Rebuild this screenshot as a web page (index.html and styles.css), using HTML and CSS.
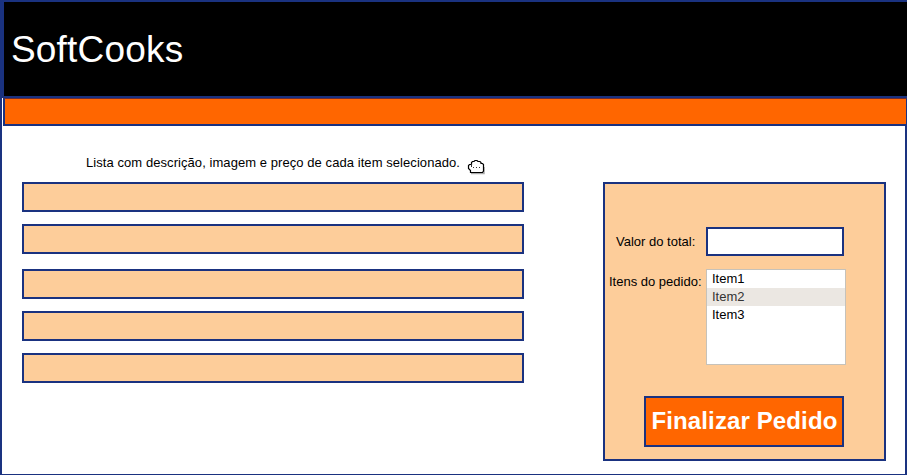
FILE: index.html
```html
<!DOCTYPE html>
<html lang="pt-BR">
<head>
<meta charset="utf-8">
<title>SoftCooks</title>
<link rel="stylesheet" href="styles.css">
</head>
<body>
<div class="page">
  <header class="header"><h1 class="brand">SoftCooks</h1></header>
  <nav class="navbar"></nav>
  <main class="content">
    <section class="products">
      <div class="caption">
        <span>Lista com descrição, imagem e preço de cada item selecionado.</span>
        <svg class="hand" width="20" height="17" viewBox="0 0 20 17">
          <path class="hand-shadow" d="M5 14.5H18V8"/>
          <path class="hand-shape" d="M4.500 13.500V11.500L2.500 9.500V6.500L3.500 5.500H5.500V3.500L6.500 2.500H8L9 1.500H11L12 2.500H14L15 3.500V4.500H16.500L17.500 5.500V12L16.500 13.500Z"/>
          <path class="hand-lines" d="M5.500 5V8M7 8.500H8M10 8.500H11M13 8.500H14"/>
        </svg>
      </div>
      <ul class="rows">
        <li class="row"></li>
        <li class="row row-wide"></li>
        <li class="row"></li>
        <li class="row"></li>
        <li class="row"></li>
      </ul>
    </section>
    <aside class="order">
      <div class="field total">
        <label class="label" for="total">Valor do total:</label>
        <input class="total-input" id="total" type="text">
      </div>
      <div class="field items">
        <span class="label">Itens do pedido:</span>
        <ul class="listbox">
          <li>Item1</li>
          <li class="selected">Item2</li>
          <li>Item3</li>
        </ul>
      </div>
      <button class="submit" type="button">Finalizar Pedido</button>
    </aside>
  </main>
</div>
</body>
</html>
```
FILE: styles.css
```css
* { box-sizing: border-box; }

body {
  margin: 0;
  background: #fff;
  color: #000;
  font: 13px/18px "Liberation Sans", Arial, sans-serif;
}

ul { margin: 0; padding: 0; list-style: none; }

.page {
  display: flex;
  flex-direction: column;
  height: 475px;
  overflow: hidden;
}

.header {
  flex: none;
  display: flex;
  align-items: center;
  height: 98px;
  padding: 2px 0 0 7px;
  border: solid #1a3280;
  border-width: 2px 0 2px 4px;
  background: #000;
}

.brand {
  margin: 0;
  color: #fff;
  font-size: 37px;
  font-weight: 400;
  line-height: 42px;
  letter-spacing: 0.18px;
}

.navbar {
  flex: none;
  height: 28px;
  border: solid #1a3280;
  border-width: 1px 1px 2px 2px;
  border-top-color: #6b2d38;
  background: #f60;
  box-shadow: -1px 0 #fff, -3px 0 #1a3280;
  margin-left: 3px;
}

.content {
  flex: 1;
  display: flex;
  align-items: flex-start;
  justify-content: space-between;
  padding: 27px 19px 0 20px;
  border: solid #1a3280;
  border-width: 0 2px 1px;
}

.products { width: 502px; }

.caption {
  display: flex;
  gap: 6px;
  height: 29px;
  padding-left: 64px;
  white-space: nowrap;
}

.caption span { padding-top: 1px; letter-spacing: 0.066px; }

.hand { margin-top: 6px; }
.hand-shape { fill: #fff; stroke: #000; stroke-width: 1.2; }
.hand-shadow { fill: none; stroke: #aaa; stroke-width: 1.5; }
.hand-lines { fill: none; stroke: #333; }

.rows { display: flex; flex-direction: column; gap: 12px; }

.row {
  height: 30px;
  border: 2px solid #1a3280;
  background: #fdcd9a;
}

.row-wide { margin-bottom: 3px; }

.order {
  display: flex;
  flex-direction: column;
  width: 283px;
  height: 279px;
  margin-top: 29px;
  padding: 43px 38px 0 4px;
  border: 2px solid #1a3280;
  background: #fdcd9a;
}

.field { display: flex; white-space: nowrap; }
.label { width: 97px; flex: none; }
.total .label { padding: 6px 0 0 7px; }
.items { margin-top: 13px; }
.items .label { padding-top: 4px; }

.total-input {
  width: 138px;
  height: 29px;
  padding: 0 4px;
  border: 2px solid #1a3280;
  background: #fff;
  font: inherit;
}

.listbox {
  flex: none;
  width: 140px;
  height: 96px;
  border: 1px solid #c6c2ba;
  background: #fff;
}

.listbox li { height: 18px; padding-left: 5px; }
.listbox .selected { background: #ebe7e2; color: #333; }

.submit {
  width: 200px;
  height: 51px;
  margin: 31px 0 0 35px;
  padding: 0 0 2px 1px;
  border: 2px solid #1a3280;
  background: #f60;
  color: #fff;
  font: bold 24px/28px "Liberation Sans", Arial, sans-serif;
  letter-spacing: 0.12px;
  white-space: nowrap;
}
```
